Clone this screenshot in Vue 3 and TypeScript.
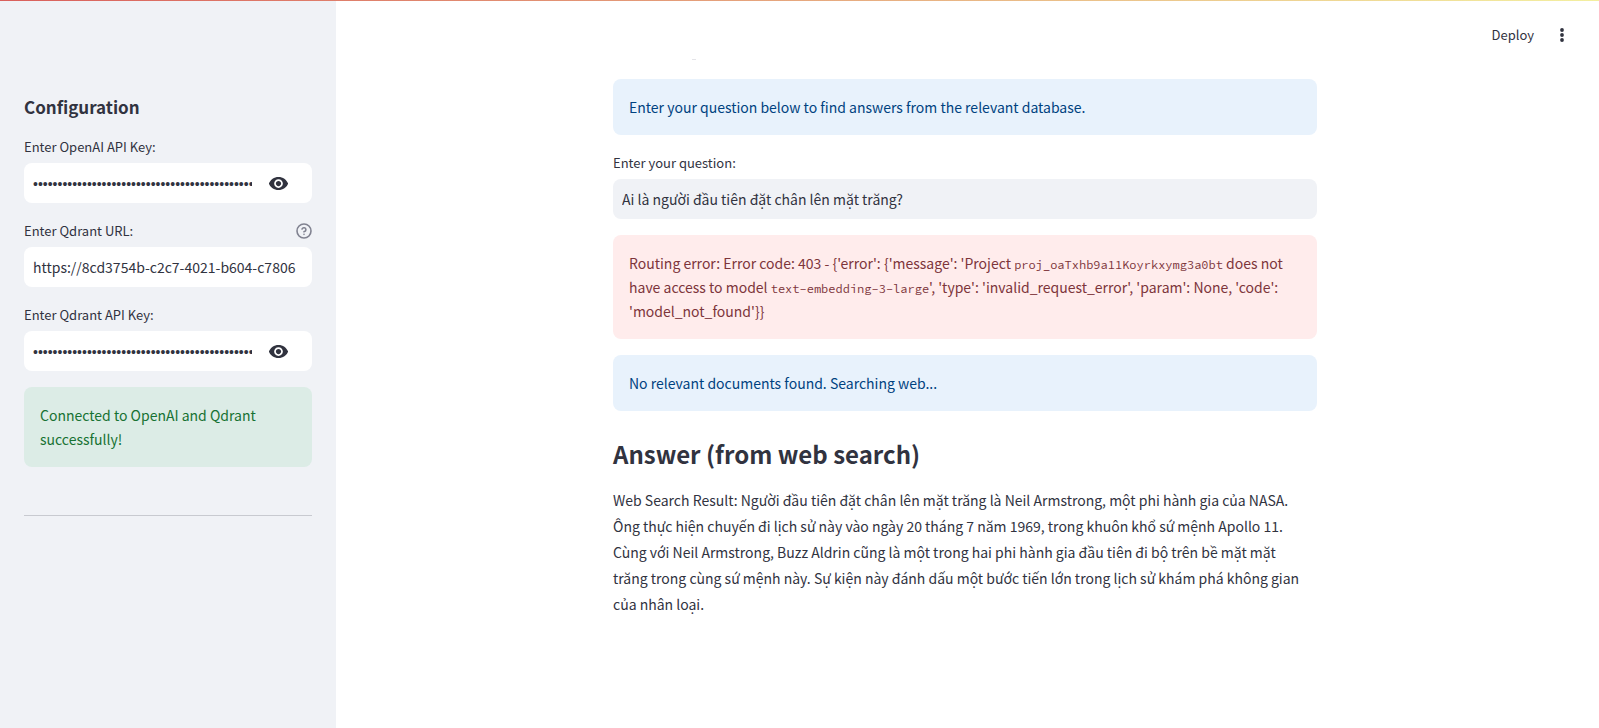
<script setup lang="ts">
import { ref } from 'vue'

const openaiKey = ref('k'.repeat(64))
const qdrantUrl = ref('https://8cd3754b-c2c7-4021-b604-c7806')
const qdrantKey = ref('q'.repeat(64))
const question = ref('Ai là người đầu tiên đặt chân lên mặt trăng?')
const showOpenai = ref(false)
const showQdrant = ref(false)
</script>

<template>
  <div class="app">
    <div class="decoration"></div>
    <aside class="sidebar">
      <h2 class="side-title">Configuration</h2>

      <div class="field">
        <div class="label-row"><label for="openai">Enter OpenAI API Key:</label></div>
        <div class="box">
          <input id="openai" v-model="openaiKey" class="secret" :type="showOpenai ? 'text' : 'password'" />
          <button type="button" class="eye" aria-label="Show OpenAI API key" @click="showOpenai = !showOpenai">
            <svg viewBox="0 0 24 24" width="21" height="21"><path fill="currentColor" d="M12 4.500C7 4.500 2.730 7.610 1 12c1.730 4.390 6 7.500 11 7.500s9.270-3.110 11-7.500c-1.730-4.390-6-7.500-11-7.500zM12 17c-2.760 0-5-2.240-5-5s2.240-5 5-5 5 2.240 5 5-2.240 5-5 5zm0-8c-1.660 0-3 1.340-3 3s1.340 3 3 3 3-1.340 3-3-1.340-3-3-3z" /></svg>
          </button>
        </div>
      </div>

      <div class="field">
        <div class="label-row">
          <label for="url">Enter Qdrant URL:</label>
          <button type="button" class="help" aria-label="Help">
            <svg viewBox="0 0 24 24" width="16" height="16" fill="none" stroke="currentColor" stroke-width="2.400" stroke-linecap="round" stroke-linejoin="round"><circle cx="12" cy="12" r="10.500" /><path d="M9.100 9a3 3 0 0 1 5.800 1c0 2-3 3-3 3M12 17h.010" /></svg>
          </button>
        </div>
        <div class="box"><input id="url" v-model="qdrantUrl" type="text" /></div>
      </div>

      <div class="field">
        <div class="label-row"><label for="qdrant">Enter Qdrant API Key:</label></div>
        <div class="box">
          <input id="qdrant" v-model="qdrantKey" class="secret" :type="showQdrant ? 'text' : 'password'" />
          <button type="button" class="eye" aria-label="Show Qdrant API key" @click="showQdrant = !showQdrant">
            <svg viewBox="0 0 24 24" width="21" height="21"><path fill="currentColor" d="M12 4.500C7 4.500 2.730 7.610 1 12c1.730 4.390 6 7.500 11 7.500s9.270-3.110 11-7.500c-1.730-4.390-6-7.500-11-7.500zM12 17c-2.760 0-5-2.240-5-5s2.240-5 5-5 5 2.240 5 5-2.240 5-5 5zm0-8c-1.660 0-3 1.340-3 3s1.340 3 3 3 3-1.340 3-3-1.340-3-3-3z" /></svg>
          </button>
        </div>
      </div>

      <div class="alert success" role="status">Connected to OpenAI and Qdrant successfully!</div>
      <hr class="divider" />
    </aside>

    <div class="page">
      <header class="toolbar">
        <button type="button" class="deploy">Deploy</button>
        <button type="button" class="menu" aria-label="Main menu">
          <svg viewBox="0 0 20 20" width="20" height="20" fill="currentColor"><circle cx="10" cy="5" r="1.900" /><circle cx="10" cy="10" r="1.900" /><circle cx="10" cy="15" r="1.900" /></svg>
        </button>
      </header>

      <main class="content">
        <div class="alert info">Enter your question below to find answers from the relevant database.</div>
        <div class="field">
          <div class="label-row"><label for="question">Enter your question:</label></div>
          <div class="box grey"><input id="question" v-model="question" type="text" /></div>
        </div>
        <div class="alert error" role="alert">Routing error: Error code: 403 - {'error': {'message': 'Project <code>proj_oaTxhb9a11Koyrkxymg3a0bt</code> does not have access to model <code>text-embedding-3-large</code>', 'type': 'invalid_request_error', 'param': None, 'code': 'model_not_found'}}</div>
        <div class="alert info">No relevant documents found. Searching web...</div>
        <section>
          <h1 class="answer-title">Answer (from web search)</h1>
          <p class="answer">
            Web Search Result: Người đầu tiên đặt chân lên mặt trăng là Neil Armstrong, một phi hành gia của NASA.<br />
            Ông thực hiện chuyến đi lịch sử này vào ngày 20 tháng 7 năm 1969, trong khuôn khổ sứ mệnh Apollo 11.<br />
            Cùng với Neil Armstrong, Buzz Aldrin cũng là một trong hai phi hành gia đầu tiên đi bộ trên bề mặt mặt<br />
            trăng trong cùng sứ mệnh này. Sự kiện này đánh dấu một bước tiến lớn trong lịch sử khám phá không gian<br />
            của nhân loại.
          </p>
        </section>
      </main>
    </div>
  </div>
</template>

<style>
body {
  margin: 0;
}
</style>

<style scoped>
.app {
  display: flex;
  min-height: 100vh;
  position: relative;
  background: #fff;
  color: #31333f;
  font-family: "Source Sans Pro", "Noto Sans CJK SC", "Noto Sans", sans-serif;
  font-size: 14px;
}
.app * {
  box-sizing: border-box;
}
.decoration {
  position: absolute;
  inset: 0 0 auto;
  height: 1px;
  background: linear-gradient(90deg, #d9605c, #f3efa0);
}
.sidebar {
  flex: 0 0 336px;
  padding: 94px 24px 24px;
  background: #f0f2f6;
  display: flex;
  flex-direction: column;
  gap: 16px;
}
.side-title {
  margin: 0;
  font-size: 17px;
  line-height: 25px;
  font-weight: 600;
}
.label-row {
  display: flex;
  align-items: center;
  justify-content: space-between;
  height: 24px;
  margin-bottom: 4px;
  font-size: 13px;
}
label {
  padding-bottom: 2px;
}
.box {
  display: flex;
  align-items: center;
  height: 40px;
  padding: 0 8px 0 9px;
  border-radius: 8px;
  background: #fff;
  overflow: hidden;
}
.grey {
  background: #f0f2f6;
}
input {
  flex: 1;
  min-width: 0;
  padding: 0;
  border: 0;
  outline: 0;
  background: transparent;
  color: inherit;
  font: inherit;
  line-height: 22px;
}
.secret {
  padding-top: 2px;
  font-family: "Liberation Sans", sans-serif;
}
button {
  display: flex;
  align-items: center;
  justify-content: center;
  padding: 0;
  border: 0;
  background: none;
  color: inherit;
  font: inherit;
}
.eye {
  flex: 0 0 52px;
}
.help {
  color: #808290;
}
.alert {
  padding: 16px;
  border-radius: 8px;
  line-height: 24px;
}
.success {
  background: #dcece6;
  color: #177233;
}
.info {
  background: #e8f2fc;
  color: #004280;
}
.error {
  background: #ffecec;
  color: #7d353b;
}
code {
  font-family: "Source Code Pro", "Noto Sans Mono CJK SC", "Liberation Mono", monospace;
  font-size: 12px;
  line-height: 16px;
}
.divider {
  width: 100%;
  margin: 32px 0 0;
  border: 0;
  border-top: 1px solid #c8cad0;
}
.page {
  flex: 1;
  min-width: 0;
  padding-right: 5px;
}
.toolbar {
  display: flex;
  align-items: center;
  justify-content: flex-end;
  gap: 18px;
  height: 59px;
  padding: 10px 22px 0 0;
  font-size: 13px;
}
.content {
  position: relative;
  max-width: 704px;
  margin: 0 auto;
  padding: 20px 0 96px;
  display: flex;
  flex-direction: column;
  gap: 16px;
}
.content::before {
  content: "";
  position: absolute;
  top: 0;
  left: 79px;
  width: 4px;
  height: 1px;
  background: #e4e4e8;
}
.answer-title {
  margin: 0;
  padding: 10px 0 16px;
  font-size: 24px;
  line-height: 34px;
  font-weight: 600;
}
.answer {
  margin: 0;
  line-height: 26px;
}
</style>
